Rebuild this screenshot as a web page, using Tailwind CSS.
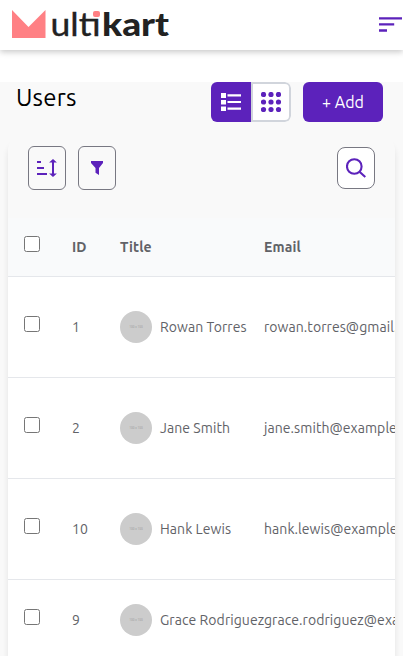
<!DOCTYPE html>
<html lang="en">
<head>
<meta charset="utf-8">
<title>Users</title>
<script src="https://cdn.jsdelivr.net/npm/@tailwindcss/browser@4"></script>
</head>
<body class="h-[656px] w-[403px] overflow-hidden bg-white font-[Ubuntu,'Noto_Sans',sans-serif] text-sm text-[#616267]">
<header class="relative flex h-[50px] items-start justify-between bg-white pl-3 shadow-[0_2px_6px_rgba(0,0,0,0.22)]">
  <svg class="mt-2 h-[34px] w-[160px]" viewBox="0 0 160 34" role="img" aria-label="Multikart">
    <path d="M0 2L16.500 19L33.500 2V30H0z" fill="#ff8084"/>
    <text x="38.500" y="28" font-family="Lato" font-size="32.500" fill="#222" stroke="#222" stroke-width=".4" textLength="50" lengthAdjust="spacingAndGlyphs">ultı</text>
    <text x="90" y="28" font-family="Lato" font-weight="900" font-size="32.500" fill="#222" textLength="67" lengthAdjust="spacingAndGlyphs">kart</text>
    <rect x="81" y="3" width="7" height="6" rx="2" fill="#ff8084"/>
  </svg>
  <svg class="mt-[17px] h-[16px] w-6" viewBox="0 0 24 16" fill="#5c22bb"><path d="M0 .2h23v2.400H0zM0 6.200h15.200v2.400H0zM0 12.200h8v2.600H0z"/></svg>
</header>
<main class="mt-8 h-[574px] bg-[#f9f9f9]">
  <div class="flex h-14 items-start pr-5 pl-4">
    <h1 class="grow text-2xl leading-[31px] tracking-[0.2px] text-black">Users</h1>
    <div class="mr-3 flex h-10 w-20 overflow-hidden rounded-md bg-white">
      <div class="flex w-10 items-center justify-center bg-[#5c22bb]">
        <svg class="h-5 w-5" viewBox="0 0 20 20" fill="#fff"><path d="M0 1h5v5H0zM0 8h5v4.500H0zM0 14.500h5V19H0zM6.500 2.300H20v2.200H6.500zM6.500 9H20v2.100H6.500zM6.500 15.500H20v2.200H6.500z"/></svg>
      </div>
      <div class="flex w-10 items-center justify-center rounded-r-md border-2 border-gray-300">
        <svg class="h-5 w-5" viewBox="0 0 20 20" fill="#5c22bb"><circle cx="2.500" cy="2.500" r="2.600"/><circle cx="10" cy="2.500" r="2.600"/><circle cx="17.500" cy="2.500" r="2.600"/><circle cx="2.500" cy="10" r="2.600"/><circle cx="10" cy="10" r="2.600"/><circle cx="17.500" cy="10" r="2.600"/><circle cx="2.500" cy="17.500" r="2.600"/><circle cx="10" cy="17.500" r="2.600"/><circle cx="17.500" cy="17.500" r="2.600"/></svg>
      </div>
    </div>
    <button class="h-10 w-20 rounded-md bg-[#5c22bb] text-base text-white">+ Add</button>
  </div>
  <section class="mx-2 h-[518px] overflow-hidden rounded-t-xl shadow-[0_6px_6px_rgba(0,0,0,0.09)]">
    <div class="flex h-20 items-start gap-3 px-5 pt-2">
      <button class="flex h-11 w-[38px] items-center justify-center rounded-md border border-[#787882]">
        <svg class="h-5 w-5" viewBox="0 0 20 20" fill="#5c22bb"><path d="M0 3h4v2H0zM0 9h7v2H0zM0 15h10v2H0zM15 4.500v11h-2.900l3.900 3.500 3.900-3.500H17v-11h2.900L16 1l-3.900 3.500z"/></svg>
      </button>
      <button class="flex h-11 w-[38px] items-center justify-center rounded-md border border-[#787882]">
        <svg class="h-3.5 w-3" viewBox="0 0 12 14" fill="#5c22bb"><path d="M0 0h12v2L8 7v7l-3.500-2.300V7L0 2z"/></svg>
      </button>
      <button class="mt-px ml-auto flex h-[42px] w-[38px] items-center justify-center rounded-lg border border-[#787882] bg-white">
        <svg class="h-5 w-5" viewBox="0 0 20 20" fill="none" stroke="#5c22bb" stroke-width="2.100"><circle cx="8.300" cy="8.500" r="7.300"/><path d="M13.500 13.700L19.300 19"/></svg>
      </button>
    </div>
    <div class="flex h-[59px] items-center border-b border-gray-200 bg-gray-50 pl-4 font-bold tracking-[0.15px]">
      <div class="w-12 shrink-0"><div class="mb-1.5 h-4 w-4 rounded-[2.5px] border border-[#767676] bg-white"></div></div>
      <div class="w-12 shrink-0">ID</div>
      <div class="w-36 shrink-0">Title</div>
      <div>Email</div>
    </div>
    <div id="rows" class="bg-white tracking-[0.07px]"></div>
  </section>
</main>
<template id="row">
  <div class="flex h-[101px] items-center border-b border-gray-200 pl-4 whitespace-nowrap">
    <div class="w-12 shrink-0"><div class="mb-1.5 h-4 w-4 rounded-[2.5px] border border-[#767676] bg-white"></div></div>
    <div data-f="id" class="w-12 shrink-0"></div>
    <div class="flex w-36 shrink-0 items-center gap-2">
      <div class="flex h-8 w-8 shrink-0 items-center justify-center rounded-full bg-[#cccccc] text-[3px] text-[#969696]">100 x 100</div>
      <span data-f="name"></span>
    </div>
    <div data-f="email"></div>
  </div>
</template>
<script>
const users = [
  ['1', 'Rowan Torres', 'rowan.torres@gmail.com'],
  ['2', 'Jane Smith', 'jane.smith@example.com'],
  ['10', 'Hank Lewis', 'hank.lewis@example.com'],
  ['9', 'Grace Rodriguez', 'grace.rodriguez@example.com'],
];
users.forEach(([id, name, email], i) => {
  const row = document.getElementById('row').content.cloneNode(true);
  const cell = f => row.querySelector(`[data-f=${f}]`);
  cell('id').textContent = id;
  cell('name').textContent = name;
  cell('email').textContent = email;
  if (i === 3) row.firstElementChild.style.height = '81px';
  document.getElementById('rows').append(row);
});
</script>
</body>
</html>
